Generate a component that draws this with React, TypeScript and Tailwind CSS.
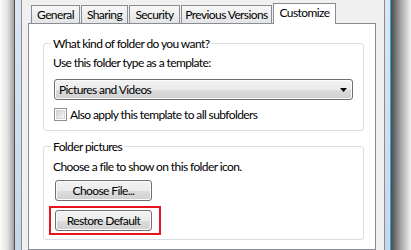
import React from "react";

const tabs = [
  { label: "General", w: "w-[49px]" },
  { label: "Sharing", w: "w-[47px]" },
  { label: "Security", w: "w-[51px]" },
  { label: "Previous Versions", w: "w-[91px]" },
];

function Tabs() {
  return (
    <div className="mt-[3px] flex h-[20px] items-end gap-px pl-[9px]">
      {tabs.map((t) => (
        <div
          key={t.label}
          className={`${t.w} flex h-[18px] items-center justify-center border border-b-0 border-[#898c95] bg-gradient-to-b from-[#f7f7f7] to-[#e4e4e4] whitespace-nowrap`}
        >
          {t.label}
        </div>
      ))}
      <div className="relative z-10 -mb-px flex h-[21px] w-[63px] justify-center border border-b-0 border-[#898c95] bg-white pt-px">
        Customize
      </div>
    </div>
  );
}

function Button({ children }: { children: React.ReactNode }) {
  return (
    <div className="flex h-[21px] w-[97px] items-center justify-center rounded-[3px] border border-[#707070] bg-[linear-gradient(#f2f2f2_0%,#ebebeb_50%,#dddddd_51%,#cfcfcf_100%)] shadow-[inset_0_0_0_1px_#fbfbfb]">
      {children}
    </div>
  );
}

function Checkbox() {
  return (
    <div className="ml-px flex h-[13px] w-[13px] shrink-0 items-center justify-center border border-[#8e8f8f] bg-white">
      <div className="h-[9px] w-[9px] border border-[#d4d7dc] bg-gradient-to-br from-[#cdd1d7] to-[#f7f7f7]" />
    </div>
  );
}

export default function App() {
  return (
    <div className="flex h-[250px] w-[411px] overflow-hidden font-['Lato','Liberation_Sans',sans-serif] text-[12px] leading-[15px] tracking-[-0.6px] text-black">
      {/* window behind, left edge */}
      <div className="w-[14px] bg-gradient-to-r from-[#fcfcfc] via-[#e6e6e6] to-[#a3a3a3]" />
      <div className="w-px bg-[#505050]" />
      <div className="w-[6px] bg-gradient-to-b from-[#dbe7f3] to-[#c4d7ea]" />
      <div className="w-px bg-[#8e8f8f]" />

      {/* dialog body */}
      <div className="flex w-[362px] flex-col bg-[#f0f0f0]">
        <Tabs />
        <div className="ml-[6px] flex h-[240px] w-[348px] flex-col border border-[#898c95] bg-white">
          <fieldset className="mt-[12px] ml-[14px] w-[321px] min-w-0 rounded-[3px] border border-[#d5dfe5] pb-[8px] pl-[9px]">
            <legend className="ml-[-2px] px-[2px]">What kind of folder do you want?</legend>
            <div className="pt-[4px]">Use this folder type as a template:</div>
            <div className="mt-[9px] ml-px flex h-[21px] w-[299px] items-center justify-between rounded-[3px] border border-[#707070] bg-[linear-gradient(#f2f2f2_0%,#ebebeb_50%,#dddddd_51%,#cfcfcf_100%)] pr-[5px] pl-[4px] shadow-[inset_0_0_0_1px_#fbfbfb]">
              <span>Pictures and Videos</span>
              <svg width="7" height="4" viewBox="0 0 7 4">
                <polygon points="0,0 7,0 3.5,4" fill="#000" />
              </svg>
            </div>
            <div className="mt-[7px] flex items-center">
              <Checkbox />
              <span className="ml-[3px]">Also apply this template to all subfolders</span>
            </div>
          </fieldset>

          <fieldset className="mt-[8px] ml-[14px] w-[321px] min-w-0 rounded-[3px] border border-[#d5dfe5] pb-[8px] pl-[9px]">
            <legend className="ml-[-2px] px-[2px]">Folder pictures</legend>
            <div className="pt-[5px]">Choose a file to show on this folder icon.</div>
            <div className="mt-[6px] ml-[2px]">
              <Button>Choose File...</Button>
            </div>
            <div className="relative mt-[9px] ml-[2px] w-fit">
              <Button>Restore Default</Button>
              {/* red highlight drawn over the button */}
              <div className="pointer-events-none absolute top-[-4px] left-[-6px] h-[29px] w-[112px] border-2 border-[#e8141d]" />
            </div>
          </fieldset>
        </div>
      </div>

      {/* frame, right edge */}
      <div className="w-px bg-[#8b8b8b]" />
      <div className="w-[5px] bg-gradient-to-b from-[#dbe7f3] to-[#c4d7ea]" />
      <div className="w-px bg-[#2aa9e6]" />
      <div className="w-[20px] bg-gradient-to-r from-[#4a4a4a] via-[#a8a8a8] to-[#f3f3f3]" />
    </div>
  );
}
